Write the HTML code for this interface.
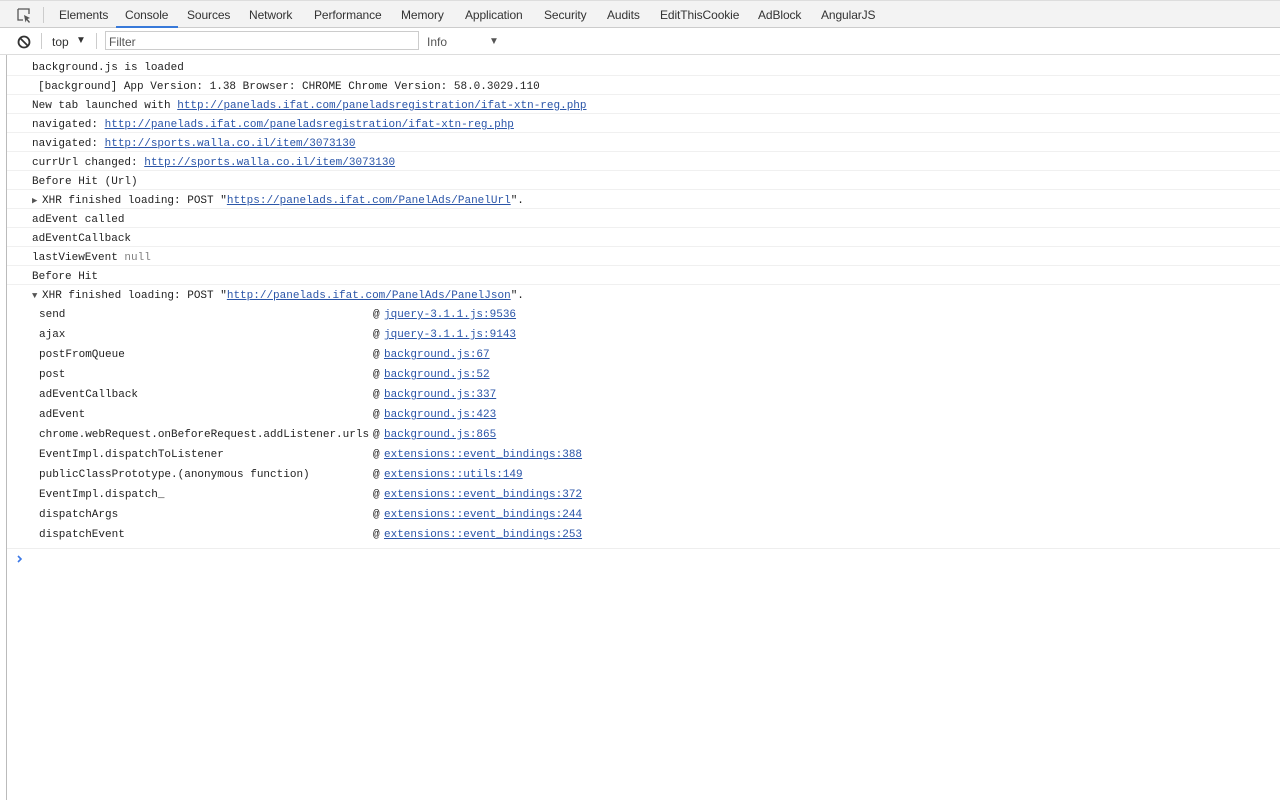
<!DOCTYPE html>
<html><head><meta charset="utf-8"><style>
*{margin:0;padding:0;box-sizing:border-box}
body{width:1280px;height:800px;background:#fff;position:relative;overflow:hidden;font-family:"Liberation Sans",sans-serif}
.tabs{position:absolute;left:0;top:0;width:1280px;height:28px;background:#f3f3f3;border-bottom:1px solid #ccc;border-top:1px solid #ddd}
.tab{position:absolute;top:7px;font-size:12px;color:#333;letter-spacing:-0.1px}
.ul{position:absolute;left:116px;top:25px;width:62px;height:2px;background:#3879d9}
.tb{position:absolute;left:0;top:28px;width:1280px;height:27px;background:#fff;border-bottom:1px solid #ddd}
.lb{position:absolute;left:6px;top:55px;width:1px;height:745px;background:#bbb}
.row{position:absolute;left:7px;width:1273px;height:19px;border-bottom:1px solid #f0f0f0;font-family:"Liberation Mono",monospace;font-size:11px;color:#222;line-height:19px;white-space:pre}
.row span.t{position:absolute;left:25px;top:2px}
a{color:#2a55a8;text-decoration:underline}
.st{position:absolute;font-family:"Liberation Mono",monospace;font-size:11px;color:#222;white-space:pre;line-height:14px}
.g{color:#808080}
.tri{position:absolute;left:0;top:0;font-size:9px;color:#555}
</style></head><body>
<div class="tabs">
<svg style="position:absolute;left:17px;top:7px" width="15" height="15" viewBox="0 0 15 15"><path d="M1 1h11v5M1 1v11h5" fill="none" stroke="#555" stroke-width="1.3"/><path d="M7 7l6 3-2.5 1 2.5 3-1 1-2.5-3-1 2.5z" fill="#555"/></svg>
<div style="position:absolute;left:43px;top:6px;width:1px;height:16px;background:#ccc"></div>
<span class="tab" style="left:59px">Elements</span>
<span class="tab" style="left:125px">Console</span>
<span class="tab" style="left:187px">Sources</span>
<span class="tab" style="left:249px">Network</span>
<span class="tab" style="left:314px">Performance</span>
<span class="tab" style="left:401px">Memory</span>
<span class="tab" style="left:465px">Application</span>
<span class="tab" style="left:544px">Security</span>
<span class="tab" style="left:607px">Audits</span>
<span class="tab" style="left:660px">EditThisCookie</span>
<span class="tab" style="left:758px">AdBlock</span>
<span class="tab" style="left:821px">AngularJS</span>
<div class="ul"></div>
</div>
<div class="tb">
<svg style="position:absolute;left:17px;top:7px" width="14" height="14" viewBox="0 0 14 14"><circle cx="7" cy="7" r="5.5" fill="none" stroke="#333" stroke-width="1.8"/><path d="M3 3l8 8" stroke="#333" stroke-width="1.8"/></svg>
<div style="position:absolute;left:41px;top:5px;width:1px;height:16px;background:#ccc"></div>
<span style="position:absolute;left:52px;top:7px;font-size:12px;color:#333">top</span>
<span style="position:absolute;left:76px;top:7px;font-size:10px;color:#333">▼</span>
<div style="position:absolute;left:96px;top:5px;width:1px;height:16px;background:#ccc"></div>
<div style="position:absolute;left:105px;top:3px;width:314px;height:19px;border:1px solid #ccc"></div>
<span style="position:absolute;left:109px;top:7px;font-size:12px;color:#555">Filter</span>
<span style="position:absolute;left:427px;top:7px;font-size:12px;color:#555">Info</span>
<span style="position:absolute;left:489px;top:8px;font-size:10px;color:#555">▼</span>
</div>
<div class="lb"></div>

<div class="row" style="top:57px"><span class="t">background.js is loaded</span></div>
<div class="row" style="top:76px"><span class="t" style="left:31px">[background] App Version: 1.38 Browser: CHROME Chrome Version: 58.0.3029.110</span></div>
<div class="row" style="top:95px"><span class="t">New tab launched with <a>http://panelads.ifat.com/paneladsregistration/ifat-xtn-reg.php</a></span></div>
<div class="row" style="top:114px"><span class="t">navigated: <a>http://panelads.ifat.com/paneladsregistration/ifat-xtn-reg.php</a></span></div>
<div class="row" style="top:133px"><span class="t">navigated: <a>http://sports.walla.co.il/item/3073130</a></span></div>
<div class="row" style="top:152px"><span class="t">currUrl changed: <a>http://sports.walla.co.il/item/3073130</a></span></div>
<div class="row" style="top:171px"><span class="t">Before Hit (Url)</span></div>
<div class="row" style="top:190px"><span class="t"><span class="tri">▶</span><span style="position:absolute;left:10px">XHR finished loading: POST "<a>https://panelads.ifat.com/PanelAds/PanelUrl</a>".</span></span></div>
<div class="row" style="top:209px"><span class="t">adEvent called</span></div>
<div class="row" style="top:228px"><span class="t">adEventCallback</span></div>
<div class="row" style="top:247px"><span class="t">lastViewEvent <span class="g">null</span></span></div>
<div class="row" style="top:266px"><span class="t">Before Hit</span></div>
<div class="row" style="top:285px;height:264px;border-bottom:1px solid #eee"><span class="t"><span class="tri">▼</span><span style="position:absolute;left:10px">XHR finished loading: POST "<a>http://panelads.ifat.com/PanelAds/PanelJson</a>".</span></span></div>

<div class="st" style="left:39px;top:305px;line-height:20px">send
ajax
postFromQueue
post
adEventCallback
adEvent
chrome.webRequest.onBeforeRequest.addListener.urls
EventImpl.dispatchToListener
publicClassPrototype.(anonymous function)
EventImpl.dispatch_
dispatchArgs
dispatchEvent</div>
<div class="st" style="left:373px;top:305px;line-height:20px">@
@
@
@
@
@
@
@
@
@
@
@</div>
<div class="st" style="left:384px;top:305px;line-height:20px"><a>jquery-3.1.1.js:9536</a>
<a>jquery-3.1.1.js:9143</a>
<a>background.js:67</a>
<a>background.js:52</a>
<a>background.js:337</a>
<a>background.js:423</a>
<a>background.js:865</a>
<a>extensions::event_bindings:388</a>
<a>extensions::utils:149</a>
<a>extensions::event_bindings:372</a>
<a>extensions::event_bindings:244</a>
<a>extensions::event_bindings:253</a></div>

<svg style="position:absolute;left:16px;top:554px" width="8" height="10" viewBox="0 0 8 10"><path d="M2 2l3 3-3 3" fill="none" stroke="#3b78e7" stroke-width="1.6"/></svg>
</body></html>
